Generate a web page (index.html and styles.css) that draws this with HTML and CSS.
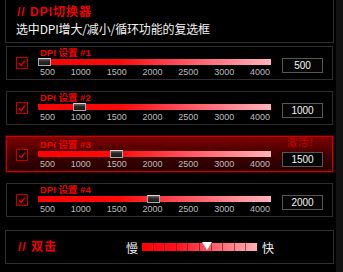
FILE: index.html
```html
<!DOCTYPE html>
<html lang="zh">
<head>
<meta charset="utf-8">
<link rel="stylesheet" href="styles.css">
</head>
<body>
<div class="wrap">
  <div class="panel head">
    <div class="title">// DPI切换器</div>
    <div class="sub">选中DPI增大/减小/循环功能的复选框</div>
  </div>

  <div class="rows">
    <div class="row">
      <div class="check"><svg viewBox="0 0 12 12" width="12" height="12"><path d="M3 6.2 L5.2 8.4 L9 3.6" fill="none" stroke="#e00000" stroke-width="1.4"/></svg></div>
      <div class="mid">
        <div class="label">DPI 设置 #1</div>
        <div class="track"><span class="handle" style="left:0px"></span></div>
        <div class="ticks"><span>500</span><span>1000</span><span>1500</span><span>2000</span><span>2500</span><span>3000</span><span>4000</span></div>
      </div>
      <div class="val">500</div>
    </div>

    <div class="row">
      <div class="check"><svg viewBox="0 0 12 12" width="12" height="12"><path d="M3 6.2 L5.2 8.4 L9 3.6" fill="none" stroke="#e00000" stroke-width="1.4"/></svg></div>
      <div class="mid">
        <div class="label">DPI 设置 #2</div>
        <div class="track"><span class="handle" style="left:35px"></span></div>
        <div class="ticks"><span>500</span><span>1000</span><span>1500</span><span>2000</span><span>2500</span><span>3000</span><span>4000</span></div>
      </div>
      <div class="val">1000</div>
    </div>

    <div class="row active">
      <div class="badge">激活！</div>
      <div class="check"><svg viewBox="0 0 12 12" width="12" height="12"><path d="M3 6.2 L5.2 8.4 L9 3.6" fill="none" stroke="#e00000" stroke-width="1.4"/></svg></div>
      <div class="mid">
        <div class="label">DPI 设置 #3</div>
        <div class="track"><span class="handle" style="left:72px"></span></div>
        <div class="ticks"><span>500</span><span>1000</span><span>1500</span><span>2000</span><span>2500</span><span>3000</span><span>4000</span></div>
      </div>
      <div class="val">1500</div>
    </div>

    <div class="row">
      <div class="check"><svg viewBox="0 0 12 12" width="12" height="12"><path d="M3 6.2 L5.2 8.4 L9 3.6" fill="none" stroke="#e00000" stroke-width="1.4"/></svg></div>
      <div class="mid">
        <div class="label">DPI 设置 #4</div>
        <div class="track"><span class="handle" style="left:109px"></span></div>
        <div class="ticks"><span>500</span><span>1000</span><span>1500</span><span>2000</span><span>2500</span><span>3000</span><span>4000</span></div>
      </div>
      <div class="val">2000</div>
    </div>
  </div>

  <div class="panel dbl">
    <div class="title dtitle">// 双击</div>
    <div class="spd">慢</div>
    <div class="speedbar">
      <span></span><span></span><span></span><span></span><span></span>
      <span></span><span></span><span></span><span></span><span></span>
      <i class="pointer" style="left:60px"></i>
    </div>
    <div class="spd">快</div>
  </div>
</div>
</body>
</html>
```

FILE: styles.css
```css
html, body {
  margin: 0;
  padding: 0;
}
body {
  background: #121212;
  width: 343px;
  height: 272px;
  overflow: hidden;
  font-family: "Liberation Sans", "Noto Sans CJK SC", sans-serif;
}
.wrap {
  width: 336px;
  height: 272px;
  background: #000;
  padding-left: 5px;
  box-sizing: border-box;
}
.panel {
  width: 329px;
  border: 1px solid #303030;
  box-sizing: border-box;
}
.head {
  border-top: none;
  height: 43px;
  padding: 5px 0 0 10px;
}
.title {
  color: #ee0000;
  font-weight: bold;
  font-size: 12px;
  line-height: 14px;
  letter-spacing: 1px;
  padding-left: 1px;
  font-family: "Liberation Sans", "Noto Sans CJK SC", sans-serif;
}
.sub {
  color: #f2f2f2;
  font-size: 12px;
  line-height: 16px;
  margin-top: 2px;
  letter-spacing: -0.15px;
  font-family: "Noto Sans CJK SC", sans-serif;
}
.rows {
  display: flex;
  flex-direction: column;
  gap: 11px;
  margin-top: 3px;
  padding-left: 1px;
}
.row {
  position: relative;
  width: 327px;
  height: 34px;
  border: 1px solid #2e2e2e;
  box-sizing: border-box;
  display: flex;
  align-items: flex-start;
  padding-left: 9px;
}
.row.active {
  height: 36px;
  padding-top: 2px;
  border-color: #c80000;
  background: linear-gradient(#7c0000, #3a0000 60%, #260000);
  box-shadow: 0 0 0 1px #4a0000;
}
.badge {
  position: absolute;
  right: 12px;
  top: -1px;
  color: #c80000;
  font-size: 10px;
  line-height: 12px;
  font-family: "Noto Sans CJK SC", sans-serif;
  letter-spacing: 1px;
}
.check {
  width: 12px;
  height: 12px;
  border: 1px solid #c00000;
  background: #1a0000;
  box-sizing: border-box;
  margin-top: 10px;
  display: flex;
}
.check svg {
  display: block;
  margin: -1px;
}
.mid {
  width: 233px;
  margin-left: 10px;
  display: flex;
  flex-direction: column;
}
.label {
  color: #f00000;
  font-weight: bold;
  font-size: 9.5px;
  line-height: 11px;
  padding-left: 2px;
  font-family: "Liberation Sans", "Noto Sans CJK SC", sans-serif;
}
.track {
  position: relative;
  height: 6px;
  margin-top: 1px;
  background: linear-gradient(to right, #ff0000 0%, #ff0a0a 35%, #ff4a58 60%, #ffb4bb 100%);
}
.handle {
  position: absolute;
  top: -1px;
  width: 13px;
  height: 8px;
  box-sizing: border-box;
  border: 1px solid #a8a8a8;
  border-top-color: #d8d8d8;
  background: linear-gradient(#6a6a6a, #2a2a2a 40%, #1a1a1a);
}
.ticks {
  display: flex;
  justify-content: space-between;
  padding: 0 1px 0 2px;
  margin-top: 2px;
  color: #bdbdbd;
  font-size: 9px;
  line-height: 10px;
}
.val {
  width: 41px;
  height: 15px;
  box-sizing: border-box;
  margin-left: 11px;
  margin-top: 11px;
  border: 1px solid #575757;
  background: #050505;
  color: #f4f4f4;
  font-size: 10px;
  line-height: 13px;
  text-align: center;
}
.row.active .val {
  margin-top: 13px;
}
.dbl {
  margin-top: 13px;
  height: 34px;
  display: flex;
  align-items: center;
  padding-left: 11px;
}
.dtitle {
  width: 108px;
}
.spd {
  color: #f0f0f0;
  font-size: 12px;
  line-height: 13px;
  font-family: "Noto Sans CJK SC", sans-serif;
}
.speedbar {
  position: relative;
  width: 115px;
  height: 8px;
  margin: 0 5px 0 4px;
  display: flex;
  background: linear-gradient(to right, #ff0000 0%, #ff1020 30%, #ff5a66 60%, #ffb0b8 100%);
}
.speedbar span {
  flex: 1;
  border-right: 1px solid rgba(90, 0, 0, 0.55);
}
.speedbar span:last-of-type {
  border-right: none;
}
.pointer {
  position: absolute;
  top: -1px;
  width: 0;
  height: 0;
  border-left: 5px solid transparent;
  border-right: 5px solid transparent;
  border-top: 8px solid #ffffff;
}
```
